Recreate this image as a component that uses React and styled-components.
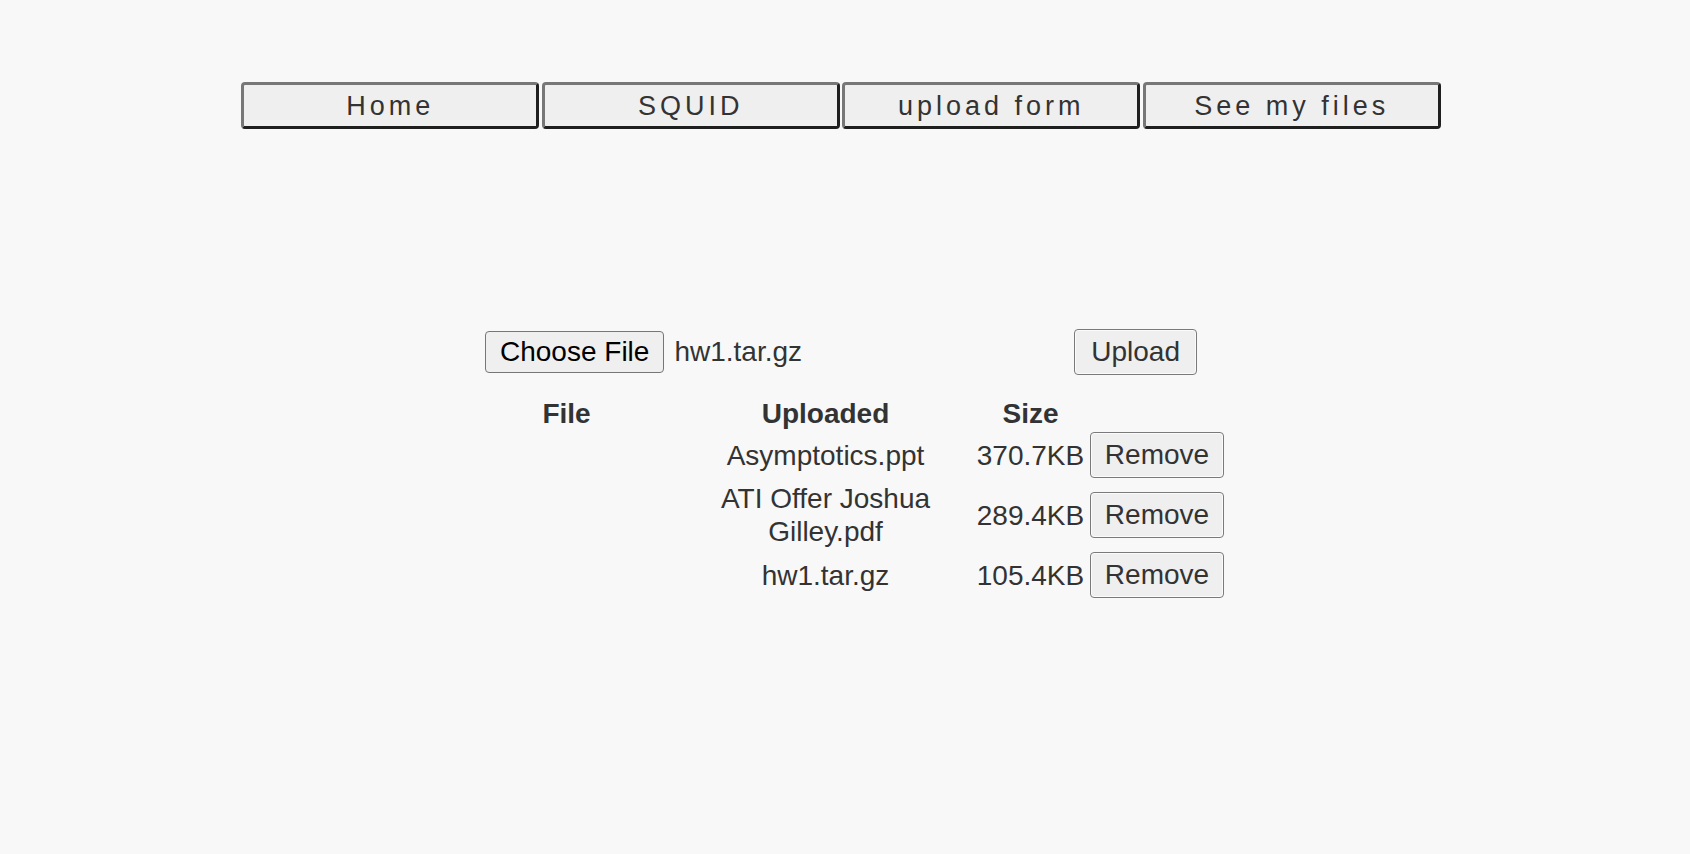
import React from "react";
import styled, { createGlobalStyle } from "styled-components";

const GlobalStyle = createGlobalStyle`
  html, body {
    margin: 0;
    padding: 0;
    background: #f8f8f8;
  }
  body {
    font-family: "Liberation Sans", Arial, sans-serif;
    color: #333;
  }
`;

const Page = styled.div`
  padding: 82px 8px 0 0;
  display: flex;
  flex-direction: column;
  align-items: center;
`;

const Nav = styled.nav`
  display: flex;
  gap: 2.5px;
`;

const NavButton = styled.button`
  width: 298px;
  height: 47px;
  box-sizing: border-box;
  background: #efefef;
  border-width: 3px;
  border-style: solid;
  border-color: #777 #1f1f1f #1f1f1f #777;
  border-radius: 4px;
  font-family: "Liberation Sans", Arial, sans-serif;
  font-size: 27px;
  letter-spacing: 4px;
  color: #333;
  padding: 2px 0 0;
  cursor: pointer;
`;

const UploadForm = styled.form`
  margin-top: 200px;
  width: 712px;
  height: 46px;
  display: flex;
  align-items: center;
  justify-content: space-between;
`;

const FilePicker = styled.div`
  display: flex;
  align-items: center;
  gap: 10px;
`;

const ChooseButton = styled.button`
  height: 42px;
  box-sizing: border-box;
  padding: 0 14px;
  background: #efefef;
  border: 1px solid #767676;
  border-radius: 4px;
  font-family: "Liberation Sans", Arial, sans-serif;
  font-size: 28px;
  color: #000;
`;

const FileName = styled.span`
  font-size: 28px;
  color: #333;
`;

const GreyButton = styled.button`
  height: 46px;
  box-sizing: border-box;
  padding: 0 ${(p) => p.$pad || 14}px;
  background: #efefef;
  border: 1px solid #7a7a7a;
  box-shadow: inset 0 0 0 1px #fbfbfb;
  border-radius: 4px;
  font-family: "Liberation Sans", Arial, sans-serif;
  font-size: 28px;
  color: #333;
`;

const FileTable = styled.table`
  margin-top: 22px;
  width: 773px;
  table-layout: fixed;
  border-collapse: separate;
  border-spacing: 2px;
  font-size: 28px;
  line-height: 33px;
  color: #333;
`;

const HeadCell = styled.th`
  width: ${(p) => p.$w}px;
  padding: 1px;
  line-height: 28px;
  font-weight: bold;
  text-align: center;
`;

const Cell = styled.td`
  padding: 1px;
  text-align: center;
  vertical-align: middle;
`;

const files = [
  { name: "Asymptotics.ppt", size: "370.7KB" },
  { name: "ATI Offer Joshua Gilley.pdf", size: "289.4KB" },
  { name: "hw1.tar.gz", size: "105.4KB" },
];

export default function App() {
  return (
    <>
      <GlobalStyle />
      <Page>
        <Nav>
          <NavButton>Home</NavButton>
          <NavButton>SQUID</NavButton>
          <NavButton>upload form</NavButton>
          <NavButton>See my files</NavButton>
        </Nav>

        <UploadForm onSubmit={(e) => e.preventDefault()}>
          <FilePicker>
            <ChooseButton type="button">Choose File</ChooseButton>
            <FileName>hw1.tar.gz</FileName>
          </FilePicker>
          <GreyButton type="submit" $pad={16}>
            Upload
          </GreyButton>
        </UploadForm>

        <FileTable>
          <thead>
            <tr>
              <HeadCell $w={218}>File</HeadCell>
              <HeadCell $w={292}>Uploaded</HeadCell>
              <HeadCell $w={110}>Size</HeadCell>
              <HeadCell $w={135}></HeadCell>
            </tr>
          </thead>
          <tbody>
            {files.map((f) => (
              <tr key={f.name}>
                <Cell></Cell>
                <Cell>{f.name}</Cell>
                <Cell>{f.size}</Cell>
                <Cell>
                  <GreyButton type="button">Remove</GreyButton>
                </Cell>
              </tr>
            ))}
          </tbody>
        </FileTable>
      </Page>
    </>
  );
}
